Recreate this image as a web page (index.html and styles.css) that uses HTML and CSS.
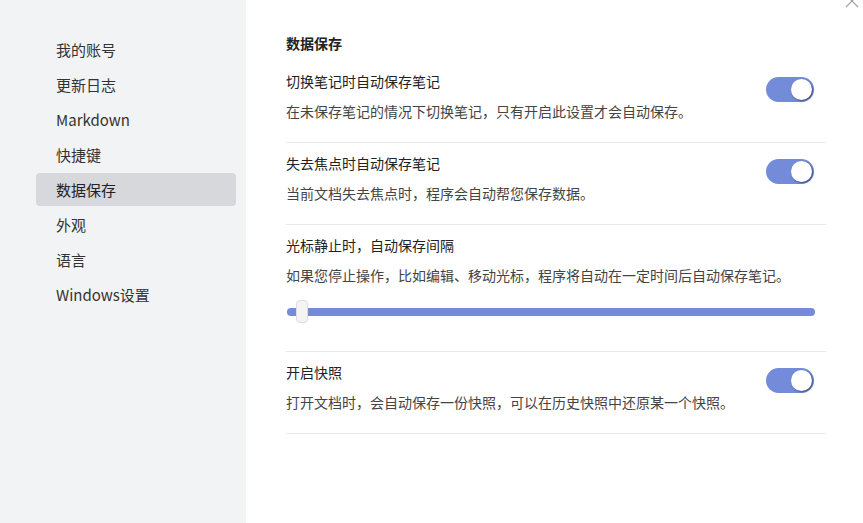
FILE: index.html
```html
<!DOCTYPE html>
<html lang="zh-CN">
<head>
  <meta charset="UTF-8">
  <meta name="viewport" content="width=device-width, initial-scale=1.0">
  <title>设置</title>
  <link rel="stylesheet" href="styles.css">
</head>
<body>
  <div class="window">
    <aside class="sidebar">
      <div class="nav-item">我的账号</div>
      <div class="nav-item">更新日志</div>
      <div class="nav-item">Markdown</div>
      <div class="nav-item">快捷键</div>
      <div class="nav-item active">数据保存</div>
      <div class="nav-item">外观</div>
      <div class="nav-item">语言</div>
      <div class="nav-item">Windows设置</div>
    </aside>
    <main class="content">
      <h2>数据保存</h2>
      <div class="row">
        <div class="row-text">
          <div class="row-title">切换笔记时自动保存笔记</div>
          <div class="row-desc">在未保存笔记的情况下切换笔记，只有开启此设置才会自动保存。</div>
        </div>
        <span class="switch"></span>
      </div>
      <div class="row">
        <div class="row-text">
          <div class="row-title">失去焦点时自动保存笔记</div>
          <div class="row-desc">当前文档失去焦点时，程序会自动帮您保存数据。</div>
        </div>
        <span class="switch"></span>
      </div>
      <div class="row row-slider">
        <div class="row-text">
          <div class="row-title">光标静止时，自动保存间隔</div>
          <div class="row-desc">如果您停止操作，比如编辑、移动光标，程序将自动在一定时间后自动保存笔记。</div>
          <div class="slider">
            <div class="slider-track"></div>
            <div class="slider-thumb"></div>
          </div>
        </div>
      </div>
      <div class="row">
        <div class="row-text">
          <div class="row-title">开启快照</div>
          <div class="row-desc">打开文档时，会自动保存一份快照，可以在历史快照中还原某一个快照。</div>
        </div>
        <span class="switch"></span>
      </div>
    </main>
    <svg class="close" width="16" height="16" viewBox="0 0 16 16">
      <path d="M2 2 L14 14 M14 2 L2 14" stroke="#a0a4ab" stroke-width="1.2" fill="none"/>
    </svg>
  </div>
</body>
</html>
```

FILE: styles.css
```css
* {
  box-sizing: border-box;
}
html, body {
  margin: 0;
  padding: 0;
  height: 100%;
  overflow: hidden;
}
body {
  font-family: "Noto Sans CJK SC", "Noto Sans", sans-serif;
  background: #ffffff;
  color: #333;
}
.window {
  display: flex;
  height: 523px;
  position: relative;
}
.sidebar {
  width: 246px;
  flex-shrink: 0;
  background: #f2f3f5;
  padding: 33px 10px 0 36px;
}
.nav-item {
  height: 33px;
  line-height: 33px;
  margin-bottom: 2px;
  padding-left: 20px;
  font-size: 15px;
  color: #333;
  border-radius: 4px;
}
.nav-item.active {
  background: #d6d8dc;
  color: #222;
}
.content {
  flex: 1;
  padding: 33px 37px 0 40px;
}
.content h2 {
  margin: 0 0 8px;
  font-size: 14px;
  line-height: 20px;
  font-weight: bold;
  color: #222;
}
.row {
  display: flex;
  align-items: flex-start;
  padding: 10px 0 21px;
  border-bottom: 1px solid #e9e9eb;
}
.row-text {
  flex: 1;
}
.row-title {
  font-size: 14px;
  line-height: 20px;
  color: #222;
  margin-bottom: 10px;
}
.row-desc {
  font-size: 14px;
  line-height: 20px;
  color: #444;
}
.switch {
  width: 48px;
  height: 25px;
  margin: 6px 12px 0 0;
  border-radius: 13px;
  background: #738bd9;
  position: relative;
  flex-shrink: 0;
}
.switch::after {
  content: "";
  position: absolute;
  right: 2px;
  top: 2px;
  width: 21px;
  height: 21px;
  border-radius: 50%;
  background: #fff;
  box-shadow: 1px 1px 2px rgba(0, 0, 0, 0.45);
}
.row-slider {
  padding-bottom: 0;
}
.slider {
  position: relative;
  height: 23px;
  margin: 15px 11px 28px 1px;
  display: flex;
  align-items: center;
}
.slider-track {
  flex: 1;
  height: 8px;
  border-radius: 4px;
  background: #738bd9;
}
.slider-thumb {
  position: absolute;
  left: 9px;
  top: 0;
  width: 12px;
  height: 23px;
  border: 1px solid #dcdcdc;
  border-radius: 4px;
  background: #f4f4f5;
}
.close {
  position: absolute;
  top: -7px;
  right: 3px;
}
```
